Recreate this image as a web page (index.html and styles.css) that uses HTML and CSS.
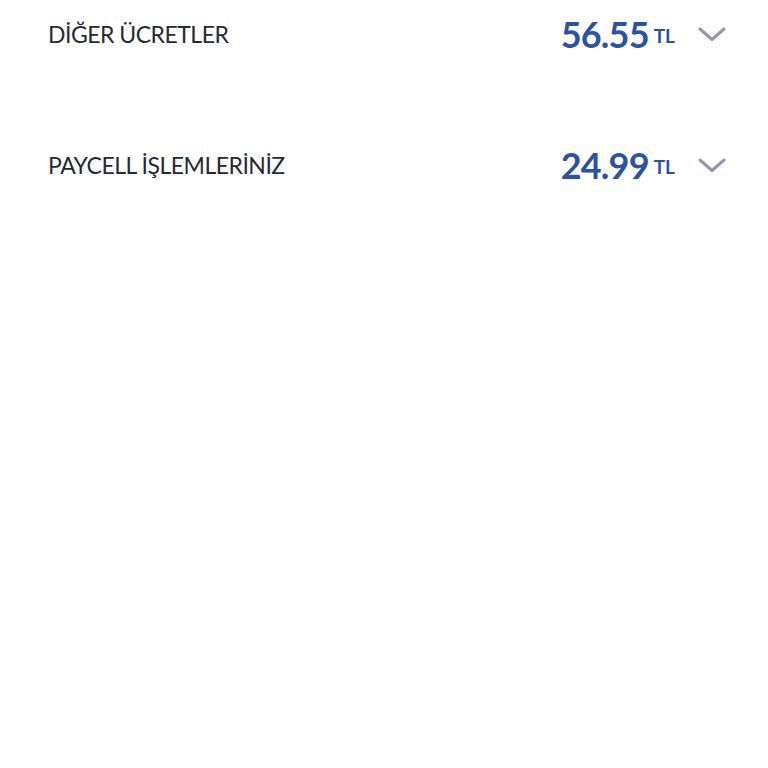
FILE: index.html
```html
<!DOCTYPE html>
<html lang="tr">
<head>
<meta charset="UTF-8">
<meta name="viewport" content="width=device-width, initial-scale=1.0">
<title>Fatura Detayı</title>
<link rel="stylesheet" href="styles.css">
</head>
<body>
<div class="list">
<div class="row">
<div class="label">DİĞER ÜCRETLER</div>
<div class="amount">
<span class="value">56.55</span><span class="currency">TL</span>
<svg class="chevron" width="28" height="15" viewBox="0 0 28 15"><path d="M2 2 L14 12.5 L26 2" fill="none" stroke="#9097b3" stroke-width="3" stroke-linecap="round" stroke-linejoin="round"/></svg>
</div>
</div>
<div class="row">
<div class="label">PAYCELL İŞLEMLERİNİZ</div>
<div class="amount">
<span class="value">24.99</span><span class="currency">TL</span>
<svg class="chevron" width="28" height="15" viewBox="0 0 28 15"><path d="M2 2 L14 12.5 L26 2" fill="none" stroke="#9097b3" stroke-width="3" stroke-linecap="round" stroke-linejoin="round"/></svg>
</div>
</div>
</div>
</body>
</html>
```

FILE: styles.css
```css
body {
margin: 0;
background-color: #fff;
font-family: Lato, 'Noto Sans', sans-serif;
}

.list {
padding: 0 42px 0 48px;
}

.row {
display: flex;
justify-content: space-between;
align-items: center;
height: 68px;
margin-bottom: 63px;
}

.label {
font-size: 23px;
color: #262a35;
letter-spacing: -0.5px;
}

.amount {
display: flex;
align-items: center;
color: #2b52a5;
}

.value {
font-size: 36px;
font-weight: bold;
line-height: 1;
letter-spacing: -0.8px;
}

.currency {
font-size: 19px;
font-weight: bold;
line-height: 1;
margin-left: 5px;
margin-top: 2px;
}

.chevron {
margin-left: 23px;
}
```
